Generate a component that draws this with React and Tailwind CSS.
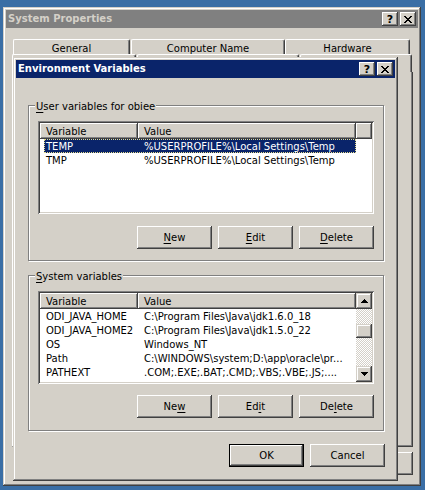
import React from 'react';

const userVars = [
  ['TEMP', '%USERPROFILE%\\Local Settings\\Temp'],
  ['TMP', '%USERPROFILE%\\Local Settings\\Temp'],
];

const systemVars = [
  ['ODI_JAVA_HOME', 'C:\\Program Files\\Java\\jdk1.6.0_18'],
  ['ODI_JAVA_HOME2', 'C:\\Program Files\\Java\\jdk1.5.0_22'],
  ['OS', 'Windows_NT'],
  ['Path', 'C:\\WINDOWS\\system;D:\\app\\oracle\\pr...'],
  ['PATHEXT', '.COM;.EXE;.BAT;.CMD;.VBS;.VBE;.JS;....'],
];

const closePixels = [
  [0, 0], [1, 0], [6, 0], [7, 0],
  [1, 1], [2, 1], [5, 1], [6, 1],
  [2, 2], [3, 2], [4, 2], [5, 2],
  [3, 3], [4, 3],
  [2, 4], [3, 4], [4, 4], [5, 4],
  [1, 5], [2, 5], [5, 5], [6, 5],
  [0, 6], [1, 6], [6, 6], [7, 6],
];

function CloseGlyph() {
  return (
    <svg width="8" height="7" shapeRendering="crispEdges">
      {closePixels.map(([x, y]) => (
        <rect key={`${x}-${y}`} x={x} y={y} width="1" height="1" fill="#000" />
      ))}
    </svg>
  );
}

function Arrow({ down }) {
  return (
    <svg width="7" height="4" shapeRendering="crispEdges" className={down ? 'rotate-180' : ''}>
      <path d="M3 0h1v1h1v1h1v1h1v1H0V3h1V2h1V1h1z" fill="#000" />
    </svg>
  );
}

function CaptionButton({ children, className = '' }) {
  return (
    <div className={`w-[16px] h-[14px] bg-[#d4d0c8] flex items-center justify-center shadow-[inset_-1px_-1px_0_#404040,inset_1px_1px_0_#fff,inset_-2px_-2px_0_#808080] ${className}`}>
      {children}
    </div>
  );
}

function TitleBar({ title, active }) {
  return (
    <div className={`h-[18px] flex items-center pl-[2px] pr-[2px] ${active ? 'bg-[#0a246a] text-white' : 'bg-[#808080] text-[#d4d0c8]'}`}>
      <span className="flex-1 font-bold leading-none">{title}</span>
      <CaptionButton>
        <span className="font-bold text-[11px] leading-none text-black">?</span>
      </CaptionButton>
      <CaptionButton className="ml-[2px]">
        <CloseGlyph />
      </CaptionButton>
    </div>
  );
}

function Button({ children, isDefault = false }) {
  return (
    <div className={`w-[75px] h-[23px] bg-[#d4d0c8] flex items-center justify-center shadow-[inset_-1px_-1px_0_#404040,inset_1px_1px_0_#fff,inset_-2px_-2px_0_#808080] ${isDefault ? 'border border-black' : ''}`}>
      {children}
    </div>
  );
}

function Key({ children }) {
  return <span className="underline underline-offset-[2px]">{children}</span>;
}

function HeaderCell({ className = '', children }) {
  return (
    <div className={`h-[16px] pl-[6px] flex items-center bg-[#d4d0c8] shadow-[inset_-1px_-1px_0_#404040,inset_1px_1px_0_#fff,inset_-2px_-2px_0_#808080] ${className}`}>
      {children}
    </div>
  );
}

function Scrollbar() {
  return (
    <div className="w-[16px] flex flex-col">
      <div className="h-[16px] bg-[#d4d0c8] flex items-center justify-center shadow-[inset_-1px_-1px_0_#404040,inset_1px_1px_0_#d4d0c8,inset_-2px_-2px_0_#808080,inset_2px_2px_0_#fff]">
        <Arrow />
      </div>
      <div className="flex-1 flex flex-col bg-[repeating-conic-gradient(#fff_0%_25%,#d4d0c8_0%_50%)] bg-[length:2px_2px]">
        <div className="h-[15px]" />
        <div className="h-[14px] bg-[#d4d0c8] shadow-[inset_-1px_-1px_0_#404040,inset_1px_1px_0_#d4d0c8,inset_-2px_-2px_0_#808080,inset_2px_2px_0_#fff]" />
      </div>
      <div className="h-[16px] bg-[#d4d0c8] flex items-center justify-center shadow-[inset_-1px_-1px_0_#404040,inset_1px_1px_0_#d4d0c8,inset_-2px_-2px_0_#808080,inset_2px_2px_0_#fff]">
        <Arrow down />
      </div>
    </div>
  );
}

function ListView({ rows, selected = -1, scroll = false }) {
  return (
    <div className="w-[336px] h-[93px] bg-white p-[2px] flex shadow-[inset_1px_1px_0_#808080,inset_-1px_-1px_0_#fff,inset_2px_2px_0_#404040,inset_-2px_-2px_0_#d4d0c8]">
      <div className="w-[316px] flex flex-col">
        <div className="flex">
          <HeaderCell className="w-[98px]">Variable</HeaderCell>
          <HeaderCell className="w-[218px]">Value</HeaderCell>
        </div>
        {rows.map(([name, value], i) => (
          <div
            key={name}
            className={`ml-[4px] w-[312px] h-[14px] flex items-center whitespace-nowrap ${i === selected ? 'bg-[#0a246a] text-white outline outline-1 outline-dotted outline-[#e6dc8c] -outline-offset-1' : ''}`}
          >
            <div className="w-[94px] pl-[2px] overflow-hidden">{name}</div>
            <div className="flex-1 pl-[6px] overflow-hidden">{value}</div>
          </div>
        ))}
      </div>
      {scroll ? (
        <Scrollbar />
      ) : (
        <HeaderCell className="w-[16px]" />
      )}
    </div>
  );
}

function GroupBox({ label, children }) {
  return (
    <div className="relative w-[356px] h-[156px] border border-[#808080] shadow-[inset_1px_1px_0_#fff,1px_1px_0_#fff] pt-[15px] px-[9px]">
      <span className="absolute left-[6px] top-[-6px] px-[1px] bg-[#d4d0c8] leading-[14px]">{label}</span>
      {children}
    </div>
  );
}

function Tab({ className = '', children }) {
  return (
    <div className={`bg-[#d4d0c8] border-t border-l border-white border-r border-r-[#404040] rounded-tl-[2px] rounded-tr-[2px] shadow-[inset_-1px_0_0_#808080] flex items-center justify-center ${className}`}>
      {children}
    </div>
  );
}

export default function App() {
  return (
    <div className="relative w-[425px] h-[490px] overflow-hidden bg-[#3a6ea5] text-[10px] text-black font-['DejaVu_Sans',sans-serif]">
      {/* System Properties (behind) */}
      <div className="absolute left-[3px] top-[7px] w-[418px] h-[479px] bg-[#d4d0c8] p-[3px] flex flex-col shadow-[inset_-1px_-1px_0_#404040,inset_1px_1px_0_#d4d0c8,inset_-2px_-2px_0_#808080,inset_2px_2px_0_#fff]">
        <TitleBar title="System Properties" />
        <div className="mt-[11px] ml-[7px] flex h-[15px] items-start">
          <Tab className="w-[117px] h-[18px]">General</Tab>
          <Tab className="ml-[1px] w-[154px] h-[18px]">Computer Name</Tab>
          <Tab className="w-[125px] h-[18px]">Hardware</Tab>
        </div>
        <div className="ml-[6px] flex h-[18px] relative">
          <Tab className="w-[124px] h-[18px]" />
          <Tab className="ml-[1px] w-[162px] h-[18px]" />
          <Tab className="ml-[1px] w-[112px] h-[18px]" />
        </div>
        <div className="ml-[6px] w-[401px] h-[375px] border-l border-white border-r border-r-[#404040] border-b border-b-[#404040] shadow-[inset_-1px_-1px_0_#808080]" />
        <div className="mt-[5px] ml-[6px] w-[401px] flex justify-end gap-[6px]">
          <Button>OK</Button>
          <Button>Cancel</Button>
          <Button>Apply</Button>
        </div>
      </div>

      {/* Environment Variables dialog */}
      <div className="absolute left-[13px] top-[57px] w-[385px] h-[424px] bg-[#d4d0c8] p-[3px] flex flex-col shadow-[inset_-1px_-1px_0_#404040,inset_1px_1px_0_#d4d0c8,inset_-2px_-2px_0_#808080,inset_2px_2px_0_#fff]">
        <TitleBar title="Environment Variables" active />
        <div className="pl-[12px] pt-[27px]">
          <GroupBox label={<><Key>U</Key>ser variables for obiee</>}>
            <ListView rows={userVars} selected={0} />
            <div className="mt-[12px] flex justify-end gap-[6px]">
              <Button><Key>N</Key>ew</Button>
              <Button><Key>E</Key>dit</Button>
              <Button><Key>D</Key>elete</Button>
            </div>
          </GroupBox>
          <div className="mt-[14px]">
            <GroupBox label={<><Key>S</Key>ystem variables</>}>
              <ListView rows={systemVars} scroll />
              <div className="mt-[11px] flex justify-end gap-[6px]">
                <Button>Ne<Key>w</Key></Button>
                <Button>Ed<Key>i</Key>t</Button>
                <Button>De<Key>l</Key>ete</Button>
              </div>
            </GroupBox>
          </div>
          <div className="mt-[13px] w-[357px] flex justify-end gap-[6px]">
            <Button isDefault>OK</Button>
            <Button>Cancel</Button>
          </div>
        </div>
      </div>
    </div>
  );
}
